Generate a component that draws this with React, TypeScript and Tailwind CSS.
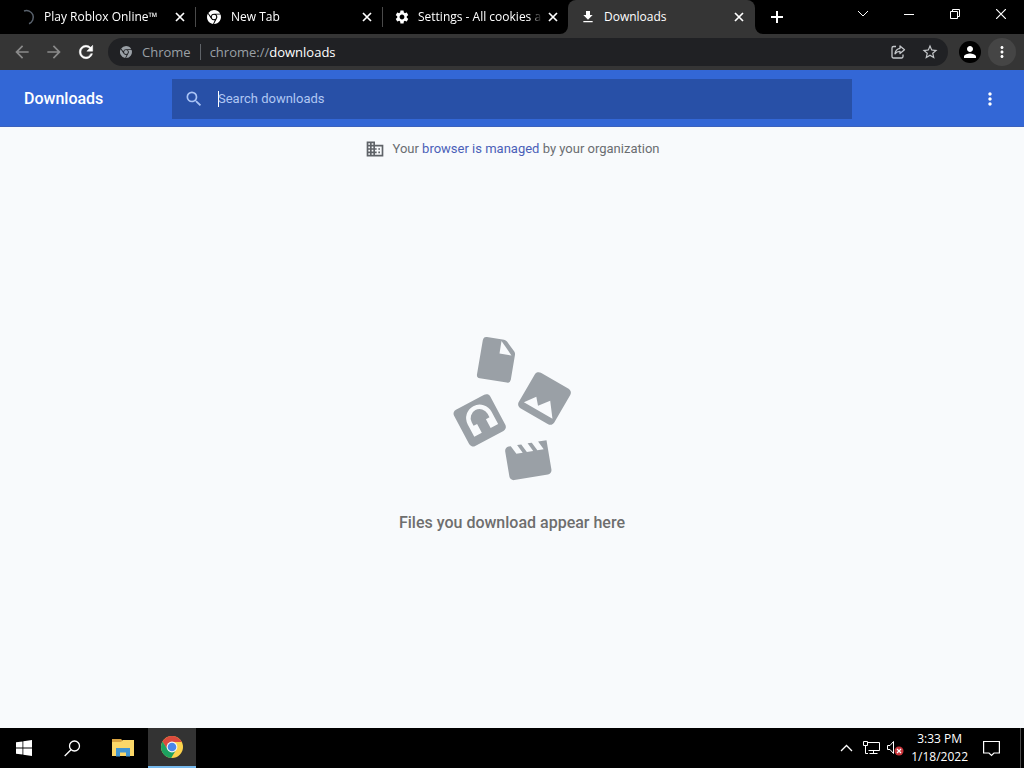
import type { ReactNode } from "react";
import {
  MdArrowBack,
  MdArrowForward,
  MdSettings,
  MdFileDownload,
  MdStarOutline,
  MdPerson,
  MdMoreVert,
  MdSearch,
  MdDomain,
} from "react-icons/md";

const SYSTEM_FONT = "font-['Open_Sans','Noto_Sans',sans-serif]";

function ChromeMark({ size }: { size: number }) {
  return (
    <svg width={size} height={size} viewBox="0 0 24 24" fill="currentColor" aria-hidden="true">
      <path d="M12 0a12 12 0 0 1 10.6 6.4H12a5.7 5.7 0 0 0-5.5 4.2L2.3 5A12 12 0 0 1 12 0z" />
      <path d="M1.4 6.4 7 15a5.7 5.7 0 0 0 6.3 2.5L10.3 23.9A12 12 0 0 1 1.4 6.4z" />
      <path d="M23.2 7.9A12 12 0 0 1 12 24l5-9.3a5.7 5.7 0 0 0-1.3-6.8z" />
      <circle cx="12" cy="12" r="3.9" />
    </svg>
  );
}

function ChromeColor() {
  return (
    <svg width="24" height="24" viewBox="0 0 24 24" aria-hidden="true">
      <circle cx="12" cy="12" r="11" fill="#fdd34c" />
      <path d="M2.5 6.5A11 11 0 0 1 21.5 6.5L21.8 7H12L7.3 14.5z" fill="#dc4a3d" />
      <path d="M2.5 6.5A11 11 0 0 0 11.2 23L16.3 14.5 12 17 7.6 14.5z" fill="#1da160" />
      <circle cx="12" cy="12" r="5.4" fill="#f4f6f8" />
      <circle cx="12" cy="12" r="4.3" fill="#4a86e8" />
    </svg>
  );
}

function Spinner() {
  return (
    <svg width="16" height="16" viewBox="0 0 16 16" fill="none" aria-hidden="true">
      <path d="M4 2A6.8 6.8 0 1 1 9 14.7" stroke="#59626d" strokeWidth="1.5" />
    </svg>
  );
}

function CloseButton({ label }: { label: string }) {
  return (
    <button aria-label={"Close " + label} className="shrink-0">
      <svg width="14" height="14" viewBox="0 0 14 14" stroke="currentColor" strokeWidth="1.7">
        <path d="M3 3l8 8M11 3l-8 8" />
      </svg>
    </button>
  );
}

function Tab({ icon, title, divider }: { icon: ReactNode; title: string; divider?: boolean }) {
  return (
    <div className="flex min-w-0 max-w-[187px] flex-1 items-center">
      <div className="flex min-w-0 flex-1 items-center pr-2 pl-[11px]">
        <span className="w-6 shrink-0">{icon}</span>
        <span className="mr-1 min-w-0 flex-1 overflow-hidden whitespace-nowrap [mask-image:linear-gradient(to_right,black_90%,transparent)]">
          {title}
        </span>
        <CloseButton label={title} />
      </div>
      <span className={divider ? "h-5 w-px bg-[#4a4a4a]" : "w-0.5"} />
    </div>
  );
}

function ActiveTab() {
  return (
    <div className="relative -ml-0.5 flex h-full min-w-0 max-w-[187px] flex-1 items-center gap-2 rounded-t-lg bg-[#353535] pr-[9px] pl-3">
      <svg className="absolute bottom-0 -left-2" width="8" height="8" aria-hidden="true">
        <path d="M8 0v8H0a8 8 0 0 0 8-8z" fill="#353535" />
      </svg>
      <svg className="absolute -right-2 bottom-0" width="8" height="8" aria-hidden="true">
        <path d="M0 0v8h8a8 8 0 0 1-8-8z" fill="#353535" />
      </svg>
      <MdFileDownload size={16} className="shrink-0" />
      <span className="flex-1 truncate">Downloads</span>
      <CloseButton label="Downloads" />
    </div>
  );
}

function TabStrip() {
  return (
    <header className={"flex h-[34px] bg-black text-xs text-white " + SYSTEM_FONT}>
      <div className="flex min-w-0 flex-1 items-center pl-[9px]">
        <Tab icon={<Spinner />} title="Play Roblox Online™" divider />
        <Tab icon={<ChromeMark size={14} />} title="New Tab" divider />
        <Tab icon={<MdSettings size={16} />} title="Settings - All cookies a" />
        <ActiveTab />
        <button aria-label="New tab" className="ml-[13px] shrink-0">
          <svg width="18" height="18" viewBox="0 0 18 18" stroke="currentColor" strokeWidth="2">
            <path d="M9 3v12M3 9h12" />
          </svg>
        </button>
      </div>
      <div className="flex h-7 shrink-0">
        <button aria-label="Search tabs" className="flex w-[46px] items-center justify-center">
          <svg width="12" height="8" viewBox="0 0 12 8" fill="none" stroke="currentColor">
            <path d="M1 1l5 5 5-5" />
          </svg>
        </button>
        <button aria-label="Minimize" className="flex w-[46px] items-center justify-center">
          <svg width="10" height="10" stroke="currentColor">
            <path d="M0 5.5h10" />
          </svg>
        </button>
        <button aria-label="Restore" className="flex w-[46px] items-center justify-center">
          <svg width="10" height="10" fill="none" stroke="currentColor">
            <path d="M.5 2.5h7v7h-7zM2.5 2.5v-2h7v7h-2" />
          </svg>
        </button>
        <button aria-label="Close window" className="flex w-[46px] items-center justify-center">
          <svg width="10" height="10" stroke="currentColor" strokeWidth="1.2">
            <path d="M0 0l10 10M10 0L0 10" />
          </svg>
        </button>
      </div>
    </header>
  );
}

function Toolbar() {
  return (
    <div className={"flex h-9 items-center bg-[#353535] pr-2 pl-3 text-[13px] leading-5 " + SYSTEM_FONT}>
      <div className="flex w-24 shrink-0 gap-3">
        <button aria-label="Back" className="text-[#8a8a8a]"><MdArrowBack size={20} /></button>
        <button aria-label="Forward" className="text-[#8a8a8a]"><MdArrowForward size={20} /></button>
        <button aria-label="Reload" className="text-white">
          <svg width="20" height="20" viewBox="0 0 24 24" fill="currentColor" stroke="currentColor" strokeWidth="0.6">
            <path d="M17.65 6.35A7.958 7.958 0 0 0 12 4c-4.42 0-7.99 3.58-7.99 8s3.57 8 7.99 8c3.73 0 6.84-2.55 7.73-6h-2.08A5.99 5.99 0 0 1 12 18c-3.31 0-6-2.69-6-6s2.69-6 6-6c1.66 0 3.14.69 4.22 1.78L13 11h7V4l-2.35 2.35z" />
          </svg>
        </button>
      </div>
      <div className="flex h-7 min-w-0 flex-1 items-center rounded-full bg-[#202124] pr-[9px] pl-3 text-[#9aa0a6]">
        <ChromeMark size={12} />
        <span className="ml-2.5">Chrome</span>
        <span className="mx-[9px] h-4 w-px bg-[#5f6368]" />
        <span className="flex-1 truncate">
          chrome://<span className="text-white">downloads</span>
        </span>
        <button aria-label="Share this page" className="text-[#c4c7ca]">
          <svg width="16" height="16" viewBox="0 0 16 16" fill="none" stroke="currentColor" strokeWidth="1.3" strokeLinejoin="round">
            <path d="M6 2.5H3.5A1.5 1.5 0 0 0 2 4v8.5A1.5 1.5 0 0 0 3.5 14h8a1.5 1.5 0 0 0 1.5-1.5V10.5" />
            <path d="M10 2l4.5 3.8L10 9.5V7.3c-2.2 0-3.8.8-5 2.5.3-3 2-5 5-5.5z" />
          </svg>
        </button>
        <button aria-label="Bookmark this tab" className="ml-[15px] text-[#c4c7ca]">
          <MdStarOutline size={18} />
        </button>
      </div>
      <button aria-label="Profile" className="ml-[11px] flex size-[22px] items-center justify-center rounded-full bg-black text-white">
        <MdPerson size={18} />
      </button>
      <button aria-label="Browser menu" className="ml-[7px] flex size-7 items-center justify-center rounded-full bg-[#454545] text-white">
        <MdMoreVert size={18} />
      </button>
    </div>
  );
}

function EmptyArt() {
  return (
    <svg width="120" height="146" viewBox="452 336 120 146" fill="#9aa0a6" aria-hidden="true">
      <path d="M487 337l17 2.7q2 .4 3 1.9l7.3 10q1 1.5.7 3.2l-4.2 25q-.7 3.4-4 2.8l-27-4.3q-3.4-.6-2.800-4l5.800-34q.8-3.900 4.200-3.300z" />
      <path d="M501.5 341l10 14.5-12-2z" fill="#f8fafc" />
      <g transform="translate(544.5 398.5) rotate(30)">
        <rect x="-20.5" y="-20.5" width="41" height="41" rx="4.5" />
        <path d="M-16 13.5l8-11 6 7 8-10.5 11 14.5z" fill="#f8fafc" />
      </g>
      <g transform="translate(479.7 420.3) rotate(-28)">
        <rect x="-20.5" y="-20.5" width="41" height="41" rx="4.5" />
        <path d="M-12.5 12V-2a13.5 13.5 0 0 1 27 0V12H6V2h4V-2a9 9 0 0 0-18 0V2h4V12z" fill="#f8fafc" />
      </g>
      <g transform="translate(528.3 460.5) rotate(-9.5) scale(2.13) translate(-12 -12)">
        <path d="M18 4l2 4h-3l-2-4h-2l2 4h-3l-2-4H8l2 4H7L5 4H4c-1.1 0-1.99.9-1.99 2L2 18c0 1.1.9 2 2 2h16c1.1 0 2-.9 2-2V4h-4z" />
      </g>
    </svg>
  );
}

function DownloadsPage() {
  return (
    <main className="flex flex-1 flex-col bg-[#f8fafc] font-[Roboto,sans-serif]">
      <div className="flex h-[57px] shrink-0 items-center border-b border-[#3c62bd] bg-[#3367d6] px-6 pt-0.5 text-white">
        <h1 className="w-[148px] shrink-0 text-base font-medium">Downloads</h1>
        <label className="flex h-10 min-w-0 max-w-[680px] flex-1 items-center bg-[#2850a7] pl-3 text-[#a9c3f5]">
          <MdSearch size={20} className="shrink-0" />
          <span className="ml-[14px] h-4 w-px bg-white" />
          <input
            type="text"
            aria-label="Search downloads"
            placeholder="Search downloads"
            className="-ml-px min-w-0 flex-1 bg-transparent text-[13px] outline-none placeholder:text-[#b0c7f3]"
          />
        </label>
        <button aria-label="More actions" className="ml-auto"><MdMoreVert size={20} /></button>
      </div>
      <p className="flex items-center justify-center gap-2 pt-3 text-[13px] leading-5 text-[#6a6d71]">
        <MdDomain size={20} className="text-[#5f6368]" />
        <span>
          Your <a href="#managed" className="text-[#4a5fb8]">browser is managed</a> by your organization
        </span>
      </p>
      <div className="flex flex-1 flex-col items-center justify-center gap-[31px] pb-[18px] text-base font-medium text-[#6e6e6e]">
        <EmptyArt />
        <p className="leading-5">Files you download appear here</p>
      </div>
    </main>
  );
}

function Taskbar() {
  return (
    <footer className={"flex h-10 shrink-0 items-stretch bg-black text-xs text-white " + SYSTEM_FONT}>
      <button aria-label="Start" className="flex w-12 items-center justify-center">
        <svg width="16" height="16" viewBox="0 0 16 16" fill="currentColor">
          <path d="M0 2.3L6.5 1.4V7.6H0zM7.3 1.3L16 0V7.6H7.3zM0 8.4H6.5V14.6L0 13.7zM7.3 8.4H16V16L7.3 14.7z" />
        </svg>
      </button>
      <button aria-label="Search" className="flex w-12 items-center justify-center">
        <svg width="17" height="17" viewBox="0 0 17 17" fill="none" stroke="currentColor" strokeWidth="1.3">
          <circle cx="10.5" cy="6" r="5" />
          <path d="M7 9.7L.7 16" />
        </svg>
      </button>
      <button aria-label="File Explorer" className="flex w-[52px] items-center justify-center pl-0.5">
        <svg width="22" height="18" viewBox="0 0 22 18">
          <path d="M0 0h9l2 2h11v15H0z" fill="#d9a441" />
          <path d="M0 3h9l2-2h11v16H0z" fill="#fbd768" />
          <path d="M4 9h14v8.5h-4v-4H8v4H4z" fill="#4195d1" />
        </svg>
      </button>
      <button aria-label="Google Chrome" className="flex w-12 items-center justify-center border-b-2 border-[#76b9ed] bg-[#333333]">
        <ChromeColor />
      </button>
      <div className="ml-auto flex items-center">
        <button aria-label="Show hidden icons">
          <svg width="13" height="8" viewBox="0 0 13 8" fill="none" stroke="currentColor" strokeWidth="1.3">
            <path d="M1 7l5.5-5.5L12 7" />
          </svg>
        </button>
        <button aria-label="Network" className="ml-2.5">
          <svg width="17" height="14" viewBox="0 0 17 14" fill="none" stroke="currentColor">
            <path d="M5 1.5h11.5v8h-11M10.5 9.5v3M6.5 12.5h8M.5.5h4v4h-4zM2.5 4.5v8H5" />
          </svg>
        </button>
        <button aria-label="Volume muted" className="ml-[7px]">
          <svg width="17" height="16" viewBox="0 0 17 16" fill="none" stroke="currentColor">
            <path d="M.5 5.5H3l3.5-4v12l-3.5-4H.5z" />
            <circle cx="12" cy="11" r="4.5" fill="#c9353b" stroke="none" />
            <path d="M10 9l4 4M14 9l-4 4" strokeWidth="1.2" />
          </svg>
        </button>
        <time className="ml-[7px] text-center leading-[18px] whitespace-nowrap">
          3:33 PM
          <br />
          1/18/2022
        </time>
        <button aria-label="Notifications" className="ml-[15px]">
          <svg width="17" height="17" viewBox="0 0 17 17" fill="none" stroke="currentColor" strokeWidth="1.2">
            <path d="M.6 1.5h15.8v11.5H11L8.5 15.5 6 13H.6z" />
          </svg>
        </button>
        <span className="ml-5 h-10 w-px bg-[#4a4a4a]" />
        <span className="w-[3px]" />
      </div>
    </footer>
  );
}

export default function App() {
  return (
    <div className="flex min-h-screen flex-col">
      <TabStrip />
      <Toolbar />
      <DownloadsPage />
      <Taskbar />
    </div>
  );
}
